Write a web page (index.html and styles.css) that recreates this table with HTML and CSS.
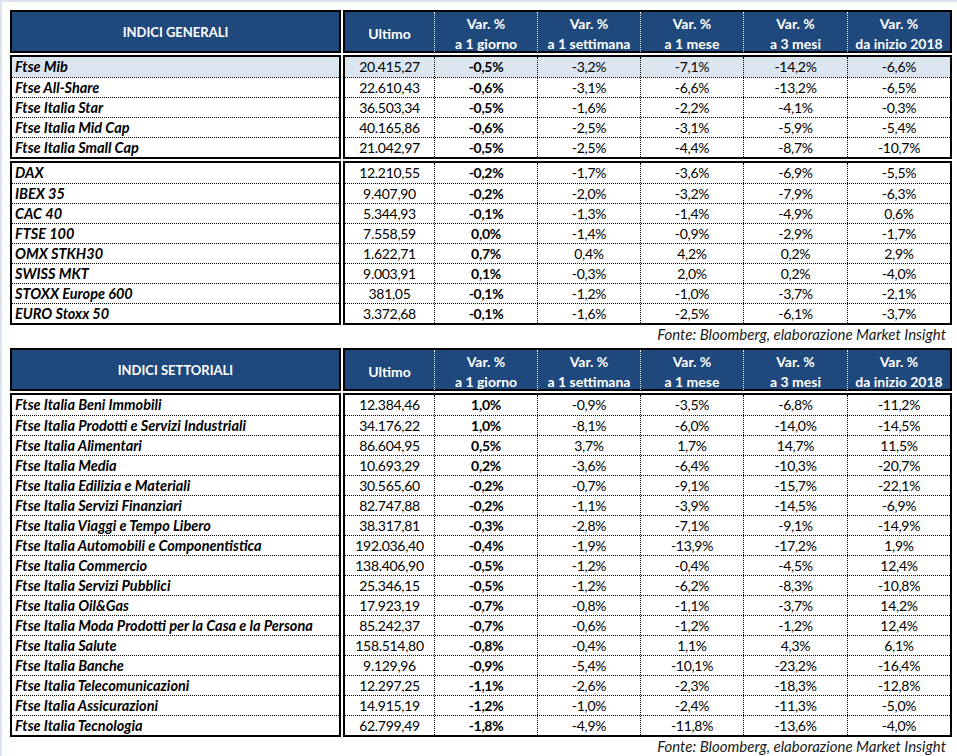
FILE: index.html
```html
<!DOCTYPE html>
<html lang="it">
<head>
<meta charset="utf-8">
<title>Indici</title>
<link rel="stylesheet" href="styles.css">
</head>
<body>
<div class="page">
  <section class="tbl">
    <div class="grid">
      <div class="blk hd hname">INDICI GENERALI</div>
      <div class="blk hd hcols">
        <div class="hc">Ultimo</div>
        <div class="hc"><span>Var. %</span><span>a 1 giorno</span></div>
        <div class="hc"><span>Var. %</span><span>a 1 settimana</span></div>
        <div class="hc"><span>Var. %</span><span>a 1 mese</span></div>
        <div class="hc"><span>Var. %</span><span>a 3 mesi</span></div>
        <div class="hc"><span>Var. %</span><span>da inizio 2018</span></div>
      </div>
      <div class="blk names">
        <div class="r hl">Ftse Mib</div>
        <div class="r">Ftse All-Share</div>
        <div class="r">Ftse Italia Star</div>
        <div class="r">Ftse Italia Mid Cap</div>
        <div class="r">Ftse Italia Small Cap</div>
      </div>
      <div class="blk vals">
        <div class="vr hl"><span>20.415,27</span><span class="b">-0,5%</span><span>-3,2%</span><span>-7,1%</span><span>-14,2%</span><span>-6,6%</span></div>
        <div class="vr"><span>22.610,43</span><span class="b">-0,6%</span><span>-3,1%</span><span>-6,6%</span><span>-13,2%</span><span>-6,5%</span></div>
        <div class="vr"><span>36.503,34</span><span class="b">-0,5%</span><span>-1,6%</span><span>-2,2%</span><span>-4,1%</span><span>-0,3%</span></div>
        <div class="vr"><span>40.165,86</span><span class="b">-0,6%</span><span>-2,5%</span><span>-3,1%</span><span>-5,9%</span><span>-5,4%</span></div>
        <div class="vr"><span>21.042,97</span><span class="b">-0,5%</span><span>-2,5%</span><span>-4,4%</span><span>-8,7%</span><span>-10,7%</span></div>
      </div>
      <div class="blk names">
        <div class="r">DAX</div>
        <div class="r">IBEX 35</div>
        <div class="r">CAC 40</div>
        <div class="r">FTSE 100</div>
        <div class="r">OMX STKH30</div>
        <div class="r">SWISS MKT</div>
        <div class="r">STOXX Europe 600</div>
        <div class="r">EURO Stoxx 50</div>
      </div>
      <div class="blk vals">
        <div class="vr"><span>12.210,55</span><span class="b">-0,2%</span><span>-1,7%</span><span>-3,6%</span><span>-6,9%</span><span>-5,5%</span></div>
        <div class="vr"><span>9.407,90</span><span class="b">-0,2%</span><span>-2,0%</span><span>-3,2%</span><span>-7,9%</span><span>-6,3%</span></div>
        <div class="vr"><span>5.344,93</span><span class="b">-0,1%</span><span>-1,3%</span><span>-1,4%</span><span>-4,9%</span><span>0,6%</span></div>
        <div class="vr"><span>7.558,59</span><span class="b">0,0%</span><span>-1,4%</span><span>-0,9%</span><span>-2,9%</span><span>-1,7%</span></div>
        <div class="vr"><span>1.622,71</span><span class="b">0,7%</span><span>0,4%</span><span>4,2%</span><span>0,2%</span><span>2,9%</span></div>
        <div class="vr"><span>9.003,91</span><span class="b">0,1%</span><span>-0,3%</span><span>2,0%</span><span>0,2%</span><span>-4,0%</span></div>
        <div class="vr"><span>381,05</span><span class="b">-0,1%</span><span>-1,2%</span><span>-1,0%</span><span>-3,7%</span><span>-2,1%</span></div>
        <div class="vr"><span>3.372,68</span><span class="b">-0,1%</span><span>-1,6%</span><span>-2,5%</span><span>-6,1%</span><span>-3,7%</span></div>
      </div>
    </div>
    <p class="src">Fonte: Bloomberg, elaborazione Market Insight</p>
  </section>

  <section class="tbl second">
    <div class="grid">
      <div class="blk hd hname">INDICI SETTORIALI</div>
      <div class="blk hd hcols">
        <div class="hc">Ultimo</div>
        <div class="hc"><span>Var. %</span><span>a 1 giorno</span></div>
        <div class="hc"><span>Var. %</span><span>a 1 settimana</span></div>
        <div class="hc"><span>Var. %</span><span>a 1 mese</span></div>
        <div class="hc"><span>Var. %</span><span>a 3 mesi</span></div>
        <div class="hc"><span>Var. %</span><span>da inizio 2018</span></div>
      </div>
      <div class="blk names">
        <div class="r">Ftse Italia Beni Immobili</div>
        <div class="r">Ftse Italia Prodotti e Servizi Industriali</div>
        <div class="r">Ftse Italia Alimentari</div>
        <div class="r">Ftse Italia Media</div>
        <div class="r">Ftse Italia Edilizia e Materiali</div>
        <div class="r">Ftse Italia Servizi Finanziari</div>
        <div class="r">Ftse Italia Viaggi e Tempo Libero</div>
        <div class="r">Ftse Italia Automobili e Componentistica</div>
        <div class="r">Ftse Italia Commercio</div>
        <div class="r">Ftse Italia Servizi Pubblici</div>
        <div class="r">Ftse Italia Oil&amp;Gas</div>
        <div class="r">Ftse Italia Moda Prodotti per la Casa e la Persona</div>
        <div class="r">Ftse Italia Salute</div>
        <div class="r">Ftse Italia Banche</div>
        <div class="r">Ftse Italia Telecomunicazioni</div>
        <div class="r">Ftse Italia Assicurazioni</div>
        <div class="r">Ftse Italia Tecnologia</div>
      </div>
      <div class="blk vals">
        <div class="vr"><span>12.384,46</span><span class="b">1,0%</span><span>-0,9%</span><span>-3,5%</span><span>-6,8%</span><span>-11,2%</span></div>
        <div class="vr"><span>34.176,22</span><span class="b">1,0%</span><span>-8,1%</span><span>-6,0%</span><span>-14,0%</span><span>-14,5%</span></div>
        <div class="vr"><span>86.604,95</span><span class="b">0,5%</span><span>3,7%</span><span>1,7%</span><span>14,7%</span><span>11,5%</span></div>
        <div class="vr"><span>10.693,29</span><span class="b">0,2%</span><span>-3,6%</span><span>-6,4%</span><span>-10,3%</span><span>-20,7%</span></div>
        <div class="vr"><span>30.565,60</span><span class="b">-0,2%</span><span>-0,7%</span><span>-9,1%</span><span>-15,7%</span><span>-22,1%</span></div>
        <div class="vr"><span>82.747,88</span><span class="b">-0,2%</span><span>-1,1%</span><span>-3,9%</span><span>-14,5%</span><span>-6,9%</span></div>
        <div class="vr"><span>38.317,81</span><span class="b">-0,3%</span><span>-2,8%</span><span>-7,1%</span><span>-9,1%</span><span>-14,9%</span></div>
        <div class="vr"><span>192.036,40</span><span class="b">-0,4%</span><span>-1,9%</span><span>-13,9%</span><span>-17,2%</span><span>1,9%</span></div>
        <div class="vr"><span>138.406,90</span><span class="b">-0,5%</span><span>-1,2%</span><span>-0,4%</span><span>-4,5%</span><span>12,4%</span></div>
        <div class="vr"><span>25.346,15</span><span class="b">-0,5%</span><span>-1,2%</span><span>-6,2%</span><span>-8,3%</span><span>-10,8%</span></div>
        <div class="vr"><span>17.923,19</span><span class="b">-0,7%</span><span>-0,8%</span><span>-1,1%</span><span>-3,7%</span><span>14,2%</span></div>
        <div class="vr"><span>85.242,37</span><span class="b">-0,7%</span><span>-0,6%</span><span>-1,2%</span><span>-1,2%</span><span>12,4%</span></div>
        <div class="vr"><span>158.514,80</span><span class="b">-0,8%</span><span>-0,4%</span><span>1,1%</span><span>4,3%</span><span>6,1%</span></div>
        <div class="vr"><span>9.129,96</span><span class="b">-0,9%</span><span>-5,4%</span><span>-10,1%</span><span>-23,2%</span><span>-16,4%</span></div>
        <div class="vr"><span>12.297,25</span><span class="b">-1,1%</span><span>-2,6%</span><span>-2,3%</span><span>-18,3%</span><span>-12,8%</span></div>
        <div class="vr"><span>14.915,19</span><span class="b">-1,2%</span><span>-1,0%</span><span>-2,4%</span><span>-11,3%</span><span>-5,0%</span></div>
        <div class="vr"><span>62.799,49</span><span class="b">-1,8%</span><span>-4,9%</span><span>-11,8%</span><span>-13,6%</span><span>-4,0%</span></div>
      </div>
    </div>
    <p class="src">Fonte: Bloomberg, elaborazione Market Insight</p>
  </section>
</div>
</body>
</html>
```

FILE: styles.css
```css
html, body {
  margin: 0;
  padding: 0;
  background: #ffffff;
}

.page {
  box-sizing: border-box;
  height: 756px;
  overflow: hidden;
  border-top: 2px solid #dbe3ef;
  border-left: 2px solid #dbe3ef;
  padding: 8px 0 0 8px;
  font-family: Lato, "Open Sans", sans-serif;
  font-size: 14.5px;
  color: #000;
}

.tbl {
  width: 942px;
}

.tbl.second {
  margin-top: 4px;
}

.grid {
  display: grid;
  grid-template-columns: 331px 609px;
  column-gap: 2px;
  row-gap: 2px;
}

.blk {
  box-sizing: border-box;
  border: 2px solid #000;
}

.hd {
  height: 43px;
  background: #1f497d;
  color: #fff;
  font-weight: 700;
}

.hname {
  display: flex;
  align-items: center;
  justify-content: center;
  padding-top: 1px;
  font-size: 13px;
}

.hcols {
  display: grid;
  grid-template-columns: 89px 103px 103px 103px 104px 103px;
  font-size: 14px;
}

.hc {
  box-sizing: border-box;
  display: flex;
  flex-direction: column;
  align-items: center;
  justify-content: center;
  line-height: 20px;
  padding-top: 2px;
}

.hc + .hc {
  border-left: 1px dotted #e8eef6;
}

.r {
  box-sizing: border-box;
  height: 20px;
  line-height: 20px;
  padding-left: 3px;
  font-weight: 700;
  font-style: italic;
  white-space: nowrap;
}

.r + .r,
.vr + .vr {
  border-top: 1px dotted #000;
}

.vr {
  box-sizing: border-box;
  height: 20px;
  line-height: 19px;
  display: grid;
  grid-template-columns: 89px 103px 103px 103px 104px 103px;
  font-size: 14px;
  letter-spacing: -0.3px;
}

.vr span {
  box-sizing: border-box;
  text-align: center;
}

.vr span + span {
  border-left: 1px dotted #000;
}

.vr .b {
  font-weight: 700;
}

.hl {
  background: #dce6f1;
}

.src {
  margin: 0;
  height: 19px;
  line-height: 19px;
  padding-right: 6px;
  text-align: right;
  font-style: italic;
  font-size: 15px;
  color: #1a1a1a;
}
```
